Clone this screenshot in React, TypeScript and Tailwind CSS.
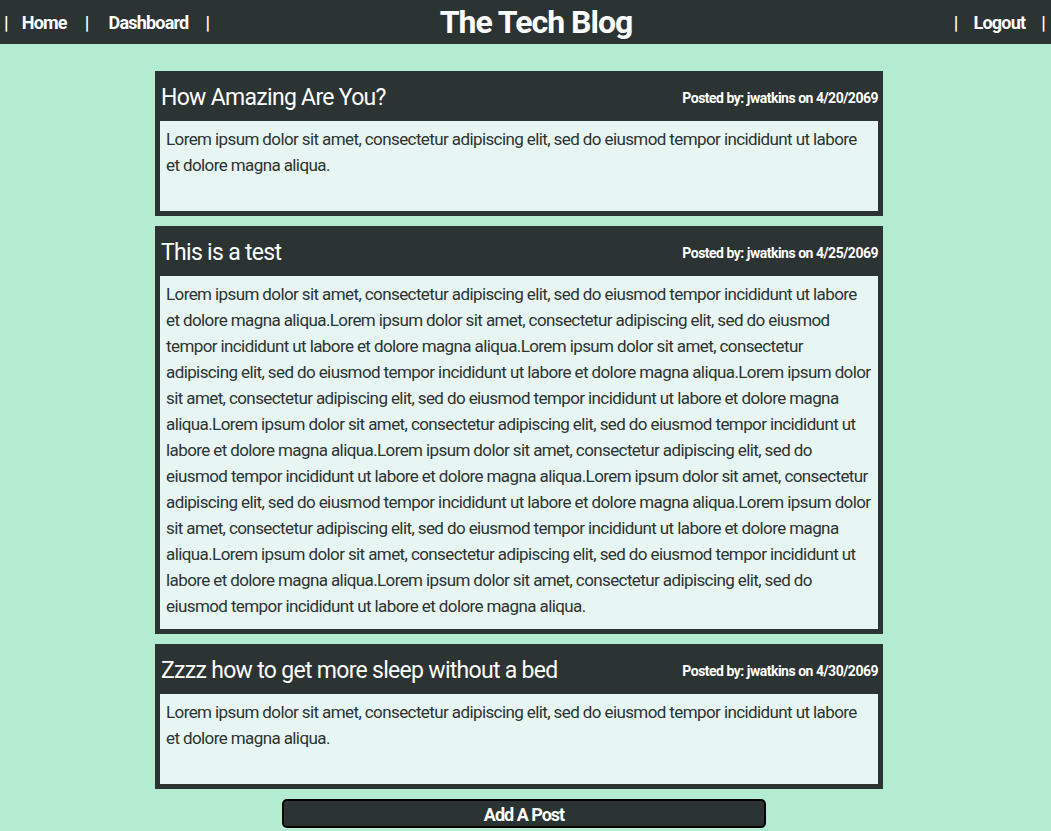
const lorem =
  'Lorem ipsum dolor sit amet, consectetur adipiscing elit, sed do eiusmod tempor incididunt ut labore et dolore magna aliqua.';

const posts = [
  { title: 'How Amazing Are You?', author: 'jwatkins', date: '4/20/2069', body: lorem },
  { title: 'This is a test', author: 'jwatkins', date: '4/25/2069', body: lorem.repeat(10) },
  { title: 'Zzzz how to get more sleep without a bed', author: 'jwatkins', date: '4/30/2069', body: lorem },
];

export default function App() {
  return (
    <div className="min-h-[831px] bg-[#b4ecd2] font-['Roboto',sans-serif] text-[#2c3333]">
      <header className="flex h-[44px] items-center bg-[#2c3333] text-[18px] font-bold tracking-[-0.8px] text-white">
        <nav className="flex flex-1 items-center">
          <span className="ml-[4px]">|</span>
          <a href="#" className="ml-[14px]">Home</a>
          <span className="ml-[18px]">|</span>
          <a href="#" className="ml-[20px]">Dashboard</a>
          <span className="ml-[17px]">|</span>
        </nav>
        <h1 className="ml-[21px] text-[32px] font-bold tracking-[-1px]">The Tech Blog</h1>
        <nav className="flex flex-1 items-center justify-end">
          <span>|</span>
          <a href="#" className="ml-[16px]">Logout</a>
          <span className="mr-[6px] ml-[16px]">|</span>
        </nav>
      </header>

      <main className="ml-[155px] w-[728px] pt-[27px]">
        {posts.map((post) => (
          <article key={post.title} className="mb-[10px] border-[5px] border-[#2c3333] bg-[#2c3333]">
            <div className="flex h-[45px] items-center justify-between pl-[1px] text-white">
              <h2 className="text-[23px] tracking-[-0.7px]">{post.title}</h2>
              <p className="text-[14px] font-bold tracking-[-0.5px]">
                Posted by: {post.author} on {post.date}
              </p>
            </div>
            <div className="min-h-[90px] bg-[#e7f6f2] px-[6px] pt-[5px] pb-[10px] text-[17px] leading-[26px] tracking-[-0.6px]">
              {post.body}
            </div>
          </article>
        ))}
      </main>

      <div className="ml-[282px] w-[484px]">
        <button
          type="button"
          className="h-[29px] w-full rounded-[5px] border-2 border-black bg-[#2c3333] text-[18px] font-bold tracking-[-1px] text-white"
        >
          Add A Post
        </button>
      </div>
    </div>
  );
}
